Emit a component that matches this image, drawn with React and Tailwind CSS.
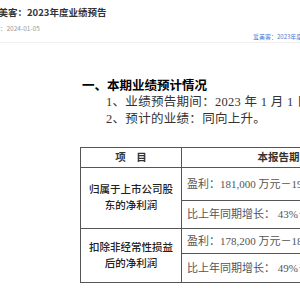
const serif = { fontFamily: '"Liberation Serif", "Noto Sans CJK SC", serif' };

const rows = [
  {
    item: ["归属于上市公司股", "东的净利润"],
    lines: [
      { text: "盈利：181,000 万元－192,000 万元", h: "h-[33px]" },
      { text: "比上年同期增长：  43%－52%", h: "h-[27px]" },
    ],
  },
  {
    item: ["扣除非经常性损益", "后的净利润"],
    lines: [
      { text: "盈利：178,200 万元－189,200 万元", h: "h-[25px]" },
      { text: "比上年同期增长：  49%－58%", h: "h-[28px]" },
    ],
  },
];

export default function App() {
  return (
    <div className="w-[300px] h-[300px] overflow-hidden bg-white" style={{ fontFamily: '"Noto Sans CJK SC", "Noto Sans", sans-serif' }}>
      {/* page header */}
      <div className="h-[43px] border-b border-[#f0f0f0] whitespace-nowrap">
        <div className="pt-[6px] -ml-[11px] text-[9.5px] leading-[12px] font-bold text-[#333]">爱美客：2023年度业绩预告</div>
        <div className="mt-[6px] -ml-[13px] text-[6.5px] leading-[8px] text-[#999]">日期：2024-01-05</div>
        <div className="mt-[1px] pl-[253px] text-[6px] leading-[8px] text-[#4a78d4]">爱美客：2023年度业绩预告</div>
      </div>

      {/* announcement body */}
      <div className="pl-[80px] whitespace-nowrap" style={serif}>
        <div className="mt-[36px] ml-[2px] h-[15px] leading-[15px] text-[12.5px] font-bold text-black">一、本期业绩预计情况</div>
        <div className="pl-[26px] h-[16px] leading-[16px] text-[12.5px] tracking-[0.3px] text-[#333]">1、业绩预告期间：2023 年 1 月 1 日至 2023 年 12 月 31 日</div>
        <div className="mt-[1px] pl-[26px] h-[16px] leading-[16px] text-[12.5px] tracking-[0.3px] text-[#333]">2、预计的业绩：同向上升。</div>

        <div className="mt-[20px] w-[296px] border border-[#555] text-[#333]">
          <div className="flex h-[20px] border-b border-[#555]">
            <div className="w-[101px] border-r border-[#555] flex items-center justify-center text-[10.5px] font-bold">项&nbsp;&nbsp;&nbsp;&nbsp;目</div>
            <div className="flex-1 flex items-center justify-center text-[10.5px] font-bold">本报告期</div>
          </div>
          {rows.map((r, i) => (
            <div key={i} className={`flex ${i === 0 ? "border-b border-[#555]" : ""}`}>
              <div className="w-[101px] border-r border-[#555] flex flex-col items-center justify-center text-[10.5px] leading-[16px] font-medium text-[#222]">
                <span>{r.item[0]}</span>
                <span>{r.item[1]}</span>
              </div>
              <div className="flex-1">
                {r.lines.map((l, j) => (
                  <div key={j} className={`${l.h} flex items-center pl-[5px] text-[11px] text-[#555] ${j === 0 ? "border-b border-[#555]" : ""}`}>{l.text}</div>
                ))}
              </div>
            </div>
          ))}
        </div>
      </div>
    </div>
  );
}
